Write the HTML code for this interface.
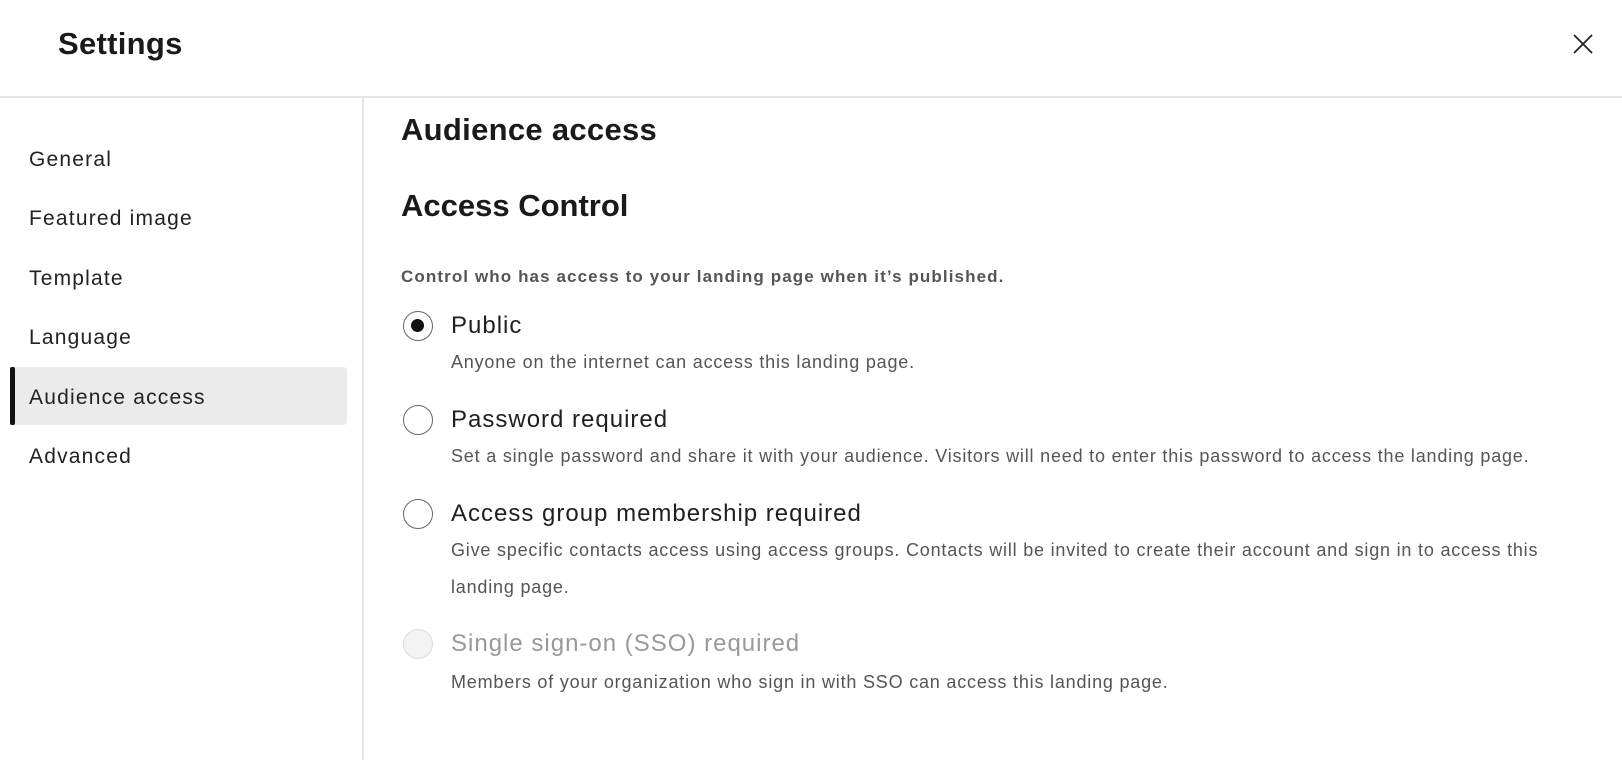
<!DOCTYPE html>
<html><head><meta charset="utf-8"><style>
*{margin:0;padding:0;box-sizing:border-box}
body{width:1622px;height:760px;overflow:hidden;background:#fff;font-family:"Liberation Sans",sans-serif;color:#1f1f1f;position:relative}
.a{position:absolute;white-space:nowrap;line-height:1}
.nav{left:29px;font-size:21px;color:#222;letter-spacing:1.2px}
.radio{position:absolute;left:403px;width:30px;height:30px;border:1.5px solid #666;border-radius:50%;background:#fff}
.lbl{left:451px;font-size:24px;color:#1f1f1f;letter-spacing:1px}
.desc{left:451px;font-size:18px;color:#555;letter-spacing:0.8px}
</style></head><body>
<div class="a" style="left:58px;top:28px;font-size:31px;font-weight:bold;color:#1a1a1a;letter-spacing:0.3px">Settings</div>
<svg style="position:absolute;left:1573px;top:34px" width="20" height="20" viewBox="0 0 20 20"><path d="M1 1L19 19M19 1L1 19" stroke="#222" stroke-width="1.8"/></svg>
<div style="position:absolute;left:0;top:96px;width:1622px;height:2px;background:#e6e6e6"></div>
<div style="position:absolute;left:362px;top:98px;width:1.5px;height:662px;background:#e6e6e6"></div>
<div style="position:absolute;left:10px;top:367px;width:337px;height:58px;background:#ebebeb;border-radius:4px"></div>
<div style="position:absolute;left:10px;top:367px;width:5px;height:58px;background:#111;border-radius:2px"></div>
<div class="a nav" style="top:149px">General</div>
<div class="a nav" style="top:208px">Featured image</div>
<div class="a nav" style="top:268px">Template</div>
<div class="a nav" style="top:327px">Language</div>
<div class="a nav" style="top:387px">Audience access</div>
<div class="a nav" style="top:446px">Advanced</div>
<div class="a" style="left:401px;top:114px;font-size:31px;font-weight:bold;color:#1a1a1a;letter-spacing:0.3px">Audience access</div>
<div class="a" style="left:401px;top:190px;font-size:31px;font-weight:bold;color:#1a1a1a">Access Control</div>
<div class="a" style="left:401px;top:268px;font-size:17px;font-weight:bold;color:#555;letter-spacing:1.1px">Control who has access to your landing page when it’s published.</div>
<div class="radio" style="top:311px"><div style="position:absolute;left:7px;top:7px;width:13px;height:13px;border-radius:50%;background:#111"></div></div>
<div class="a lbl" style="top:314px">Public</div>
<div class="a desc" style="top:353px">Anyone on the internet can access this landing page.</div>
<div class="radio" style="top:405px"></div>
<div class="a lbl" style="top:408px">Password required</div>
<div class="a desc" style="top:447px">Set a single password and share it with your audience. Visitors will need to enter this password to access the landing page.</div>
<div class="radio" style="top:499px"></div>
<div class="a lbl" style="top:502px">Access group membership required</div>
<div class="a desc" style="top:541px">Give specific contacts access using access groups. Contacts will be invited to create their account and sign in to access this</div>
<div class="a desc" style="top:578px">landing page.</div>
<div class="radio" style="top:629px;border-color:#ddd;background:#f3f3f3"></div>
<div class="a lbl" style="top:632px;color:#999">Single sign-on (SSO) required</div>
<div class="a desc" style="top:673px">Members of your organization who sign in with SSO can access this landing page.</div>
</body></html>
